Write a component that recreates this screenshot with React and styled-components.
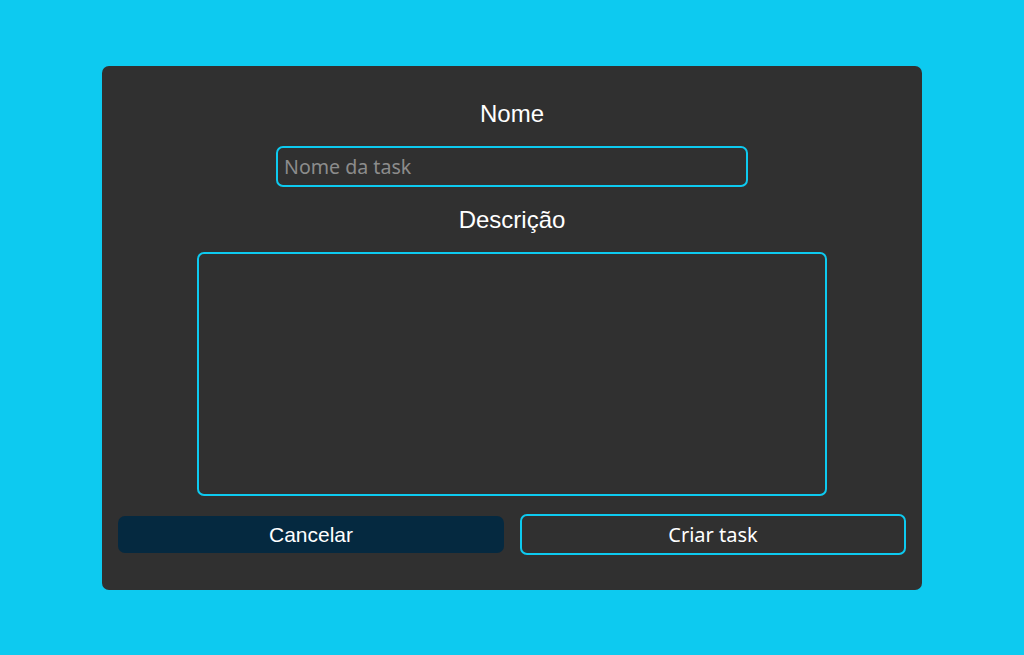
import React from "react";
import styled, { createGlobalStyle } from "styled-components";

const Global = createGlobalStyle`
  html, body { margin: 0; padding: 0; background: #0dcaf0; }
  body { font-family: "Liberation Sans", Arial, sans-serif; }
  * { box-sizing: border-box; }
`;

const Page = styled.div`
  width: 1024px;
  height: 655px;
  display: flex;
  justify-content: center;
  padding-top: 66px;
`;

const Modal = styled.form`
  width: 820px;
  height: 524px;
  background: #303030;
  border-radius: 7px;
  padding: 35px 16px 0;
  display: flex;
  flex-direction: column;
  align-items: center;
`;

const Label = styled.label`
  color: #ffffff;
  font-family: "Liberation Sans", Arial, sans-serif;
  font-size: 24px;
  line-height: 25px;
  margin-bottom: ${(p) => p.$gap}px;
`;

const field = `
  background: transparent;
  border: 2px solid #0dcaf0;
  border-radius: 7px;
  color: #ffffff;
  font-family: "Noto Sans", "Open Sans", sans-serif;
  font-size: 19.6px;
  outline: none;
  &::placeholder { color: #8c8c8c; }
`;

const Input = styled.input`
  ${field}
  width: 472px;
  height: 41px;
  padding: 0 6px;
  margin-bottom: 20px;
`;

const TextArea = styled.textarea`
  ${field}
  width: 630px;
  height: 244px;
  resize: none;
  padding: 6px;
  margin-bottom: 18px;
`;

const Buttons = styled.div`
  width: 100%;
  display: grid;
  grid-template-columns: 1fr 1fr;
  gap: 16px;
  align-items: center;
`;

const Button = styled.button`
  height: ${(p) => (p.$outline ? 41 : 37)}px;
  border-radius: 7px;
  border: ${(p) => (p.$outline ? "2px solid #0dcaf0" : "none")};
  background: ${(p) => (p.$outline ? "transparent" : "#052940")};
  color: #ffffff;
  font-family: ${(p) =>
    p.$outline
      ? `"Noto Sans", "Open Sans", sans-serif`
      : `"Liberation Sans", Arial, sans-serif`};
  font-size: ${(p) => (p.$outline ? 20 : 21)}px;
  cursor: pointer;
  padding: 0;
`;

export default function App() {
  return (
    <>
      <Global />
      <Page>
        <Modal onSubmit={(e) => e.preventDefault()}>
          <Label $gap={20}>Nome</Label>
          <Input placeholder="Nome da task" />
          <Label $gap={20}>Descrição</Label>
          <TextArea />
          <Buttons>
            <Button type="button">Cancelar</Button>
            <Button type="submit" $outline>
              Criar task
            </Button>
          </Buttons>
        </Modal>
      </Page>
    </>
  );
}
